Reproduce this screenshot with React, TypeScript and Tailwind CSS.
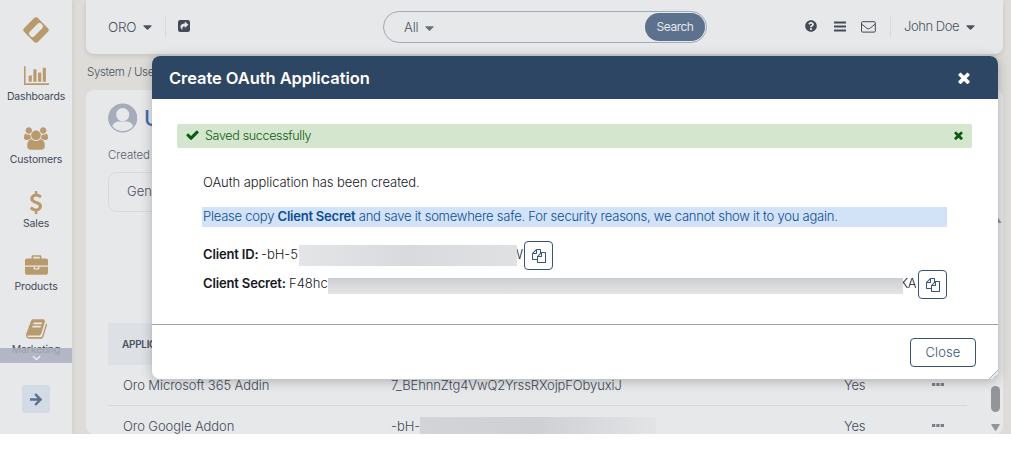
import type { ReactNode } from "react";
import { FaQuestionCircle, FaCaretDown } from "react-icons/fa";

type GlyphProps = { d: string; box?: string; className?: string };

const Glyph = ({ d, box = "0 0 1792 1792", className = "" }: GlyphProps) => (
  <svg viewBox={box} className={className} fill="currentColor" aria-hidden="true">
    <path d={d} />
  </svg>
);

const paths = {
  chart:
    "M640 896v512h-256v-512h256zm384-512v1024h-256v-1024h256zm1024 1152v128h-2048v-1536h128v1408h1920zm-640-896v768h-256v-768h256zm384-384v1152h-256v-1152h256z",
  users:
    "M593 896q-162 5-265 128h-134q-82 0-138-40.5t-56-118.5q0-353 124-353 6 0 43.5 21t97.5 42.5 119 21.5q67 0 133-23-5 37-5 66 0 139 81 256zm1071 637q0 120-73 189.5t-194 69.5h-874q-121 0-194-69.5t-73-189.5q0-53 3.5-103.5t14-109 26.5-108.5 43-97.5 62-81 85.5-53.5 111.5-20q10 0 43 21.5t73 48 107 48 135 21.5 135-21.5 107-48 73-48 43-21.5q61 0 111.5 20t85.5 53.5 62 81 43 97.5 26.5 108.5 14 109 3.5 103.5zm-1024-1277q0 106-75 181t-181 75-181-75-75-181 75-181 181-75 181 75 75 181zm704 384q0 159-112.5 271.5t-271.5 112.5-271.5-112.5-112.5-271.5 112.5-271.5 271.5-112.5 271.5 112.5 112.5 271.5zm576 225q0 78-56 118.5t-138 40.5h-134q-103-123-265-128 81-117 81-256 0-29-5-66 66 23 133 23 59 0 119-21.5t97.5-42.5 43.5-21q124 0 124 353zm-128-609q0 106-75 181t-181 75-181-75-75-181 75-181 181-75 181 75 75 181z",
  dollar:
    "M1362 1185q0 153-99.5 263.5t-258.5 136.5v175q0 14-9 23t-23 9h-135q-13 0-22.5-9.5t-9.5-22.5v-175q-66-9-127.5-31t-101.5-44.5-74-48-46.5-37.5-17.5-18q-17-21-2-41l103-135q7-10 23-12 15-2 24 9l2 2q113 99 243 125 37 8 74 8 81 0 142.5-43t61.5-122q0-28-15-53t-33.5-42-58.5-37.5-66-32-80-32.5q-39-16-61.5-25t-61.5-26.5-62.5-31-56.5-35.5-53.5-42.5-43.5-49-35.5-58-21-66.5-8.5-78q0-138 98-242t255-134v-180q0-13 9.5-22.5t22.5-9.5h135q14 0 23 9t9 23v176q57 6 110.5 23t87 33.5 63.5 37.5 39 29 15 14q17 18 5 38l-81 146q-8 15-23 16-14 3-27-7-3-3-14.5-12t-39-26.5-58.5-32-74.5-26-85.5-11.5q-95 0-155 43t-60 111q0 26 8.5 48t29.5 41.5 39.5 33 56 31 60.5 27 70 27.5q53 20 81 31.5t76 35 75.5 42.5 62 50 53 63.5 31.5 76.5 13 94z",
  briefcase:
    "M640 256h512v-128h-512v128zm1152 640v480q0 66-47 113t-113 47h-1472q-66 0-113-47t-47-113v-480h672v160q0 26 19 45t45 19h320q26 0 45-19t19-45v-160h672zm-768 0v128h-256v-128h256zm768-480v384h-1792v-384q0-66 47-113t113-47h352v-160q0-40 28-68t68-28h576q40 0 68 28t28 68v160h352q66 0 113 47t47 113z",
  book: "M1703 478q40 57 18 129l-275 906q-19 64-76.5 107.5t-122.5 43.5h-923q-77 0-148.5-53.5t-99.5-131.5q-24-67-2-127 0-4 3-27t4-37q1-8-3-21.5t-3-19.5q2-11 8-21t16.5-23.5 16.5-23.5q23-38 45-91.5t30-91.5q3-10 .5-30t-.5-28q3-11 17-28t17-23q21-36 42-92t25-90q1-9-2.5-32t.5-28q4-13 22-30.5t22-22.5q19-26 42.5-84.5t27.5-96.5q1-8-3-25.5t-2-26.5q2-8 9-18t18-23 17-21q8-12 16.5-30.5t15-35 16-36 19.5-32 26.5-23.5 36-11.5 47.5 5.5l-1 3q38-9 51-9h761q74 0 114 56t18 130l-274 906q-36 119-71.5 153.5t-128.5 34.5h-869q-27 0-38 15-11 16-1 43 24 70 144 70h923q29 0 56-15.5t35-41.5l300-987q7-22 5-57 38 15 59 43zm-1064 2q-4 13 2 22.5t20 9.5h608q13 0 25.5-9.5t16.5-22.5l21-64q4-13-2-22.5t-20-9.5h-608q-13 0-25.5 9.5t-16.5 22.5zm-83 256q-4 13 2 22.5t20 9.5h608q13 0 25.5-9.5t16.5-22.5l21-64q4-13-2-22.5t-20-9.5h-608q-13 0-25.5 9.5t-16.5 22.5z",
  times:
    "M1490 1322q0 40-28 68l-136 136q-28 28-68 28t-68-28l-294-294-294 294q-28 28-68 28t-68-28l-136-136q-28-28-28-68t28-68l294-294-294-294q-28-28-28-68t28-68l136-136q28-28 68-28t68 28l294 294 294-294q28-28 68-28t68 28l136 136q28 28 28 68t-28 68l-294 294 294 294q28 28 28 68z",
  check:
    "M1671 566q0 40-28 68l-724 724-136 136q-28 28-68 28t-68-28l-136-136-362-362q-28-28-28-68t28-68l136-136q28-28 68-28t68 28l294 295 656-657q28-28 68-28t68 28l136 136q28 28 28 68z",
  files:
    "M1696 384q40 0 68 28t28 68v1216q0 40-28 68t-68 28h-960q-40 0-68-28t-28-68v-288h-544q-40 0-68-28t-28-68v-672q0-40 20-88t48-76l408-408q28-28 76-48t88-20h416q40 0 68 28t28 68v328q68-40 128-40h416zm-544 213l-299 299h299v-299zm-640-384l-299 299h299v-299zm196 647l316-316v-416h-384v416q0 40-28 68t-68 28h-416v640h512v-256q0-40 20-88t48-76zm956 804v-1152h-384v416q0 40-28 68t-68 28h-416v640h896z",
};

const navItems = [
  { label: "Dashboards", d: paths.chart, box: "0 128 2048 1536", size: "h-[19px] w-[25px]" },
  { label: "Customers", d: paths.users, box: "0 0 1920 1792", size: "h-[23px] w-[24px]" },
  { label: "Sales", d: paths.dollar, box: "384 0 1024 1792", size: "h-[23px] w-[14px]" },
  { label: "Products", d: paths.briefcase, box: "0 0 1792 1536", size: "h-[20px] w-[23px]" },
  { label: "Marketing", d: paths.book, box: "64 128 1664 1536", size: "h-[20px] w-[21px]" },
];

const Caret = ({ className = "" }: { className?: string }) => (
  <FaCaretDown className={`h-[14px] w-[9px] shrink-0 ${className}`} />
);

const Sidebar = () => (
  <aside className="relative flex h-full w-[72px] shrink-0 flex-col items-center bg-[#e6e8ea] shadow-[1px_0_5px_rgba(0,0,0,0.08)]">
    <svg viewBox="0 0 28 28" className="mt-[16px] h-7 w-7 shrink-0" aria-hidden="true">
      <rect x="4.2" y="4.2" width="19.6" height="19.6" rx="3" transform="rotate(45 14 14)" fill="#b99a6d" />
      <rect x="5.8" y="10.8" width="16.4" height="6.4" rx="2.6" transform="rotate(-45 14 14)" fill="#e6e8ea" />
    </svg>
    <nav className="mt-[20px] flex flex-col">
      {navItems.map((item) => (
        <div key={item.label} className="flex h-[63.3px] w-[72px] flex-col items-center">
          <div className="flex h-[23px] items-center">
            <Glyph d={item.d} box={item.box} className={`${item.size} text-[#b99a6d]`} />
          </div>
          <span className="mt-[3px] text-[10.5px] leading-[14px] tracking-[-0.15px] text-[#444b58]">{item.label}</span>
        </div>
      ))}
    </nav>
    <div className="absolute left-0 top-[348px] flex h-[15px] w-[72px] items-center justify-center bg-[#a9adbd]/85">
      <svg viewBox="0 0 10 6" className="mt-[4px] h-[6px] w-[9px]" fill="none" stroke="#eceef2" strokeWidth="1.6" aria-hidden="true">
        <path d="M1 1l4 3.8L9 1" />
      </svg>
    </div>
    <div className="absolute left-[22px] top-[385px] flex h-7 w-7 items-center justify-center rounded-[3px] bg-[#d3dbe7]">
      <svg viewBox="0 0 12 13" className="h-[13px] w-3" fill="none" stroke="#5b718d" strokeWidth="2.5" aria-hidden="true">
        <path d="M0 6.5h10M5.2 1l5.3 5.5L5.2 12" />
      </svg>
    </div>
  </aside>
);

const TopBar = () => (
  <header className="flex h-[54px] w-[917px] shrink-0 items-center rounded-b-lg bg-[#e6e8ea] pl-[22px] text-[13px] font-light text-[#4c525e] shadow-[0_2px_5px_rgba(0,0,0,0.1)]">
    <span className="w-[31px] text-[13.5px] tracking-[-0.3px]">ORO</span>
    <Caret className="ml-[4px]" />
    <div className="ml-[13px] h-[22px] w-px bg-[#d8dadf]" />
    <svg viewBox="0 0 12 12" className="mb-[2px] ml-[12px] h-3 w-3" aria-hidden="true">
      <rect width="12" height="12" rx="2.2" fill="#444a56" />
      <path d="M6.8 1.6l3.6 3.2-3.6 3.2V6.2C4.9 6.1 4 7 4.4 9.8 1.3 7.4 2 3.4 6.8 3.4z" fill="#e6e8ea" />
    </svg>
    <div className="ml-[193px] flex h-8 w-[324px] items-center rounded-full border border-[#a4a8bb] pl-[20px] pr-[1px]">
      <span className="mt-[2px] tracking-[-0.1px]">All</span>
      <Caret className="ml-[6px] mt-[1px] text-[#6b7078]" />
      <div className="ml-auto flex h-7 w-[60px] items-center justify-center rounded-full bg-[#5b718d] text-[12px] font-normal tracking-[-0.5px] text-[#e6e8ea]">
        Search
      </div>
    </div>
    <FaQuestionCircle className="mb-[2px] ml-[98px] h-3 w-3 shrink-0 text-[#444a56]" />
    <svg viewBox="0 0 12 11" className="mb-[2px] ml-[17px] h-[11px] w-3" fill="#444a56" aria-hidden="true">
      <path d="M0 .5h12v2H0zM0 4.5h12v2H0zM0 8.5h12v2H0z" />
    </svg>
    <svg viewBox="0 0 15 12" className="ml-[15px] h-3 w-[15px]" fill="none" stroke="#444a56" strokeWidth="1" aria-hidden="true">
      <rect x=".5" y=".7" width="13.8" height="10.4" rx="1" />
      <path d="M.8 3.2l5.2 4.2q1.4 1 2.8 0L14 3.2" />
    </svg>
    <div className="ml-[14px] h-[22px] w-px bg-[#d8dadf]" />
    <span className="ml-[13px] w-[57px] whitespace-nowrap tracking-[-0.45px]">John Doe</span>
    <Caret className="ml-[5px]" />
  </header>
);

const Dots = () => (
  <svg viewBox="0 0 12 3" className="mb-[3px] h-[3px] w-3" fill="#7b7f88" aria-hidden="true">
    <path d="M0 0h3.3v3H0zM4.3 0h3.3v3H4.3zM8.6 0H12v3H8.6z" />
  </svg>
);

const Row = ({ name, id, className }: { name: string; id: ReactNode; className: string }) => (
  <div className={`flex w-[859px] shrink-0 items-center pl-[15px] text-[13px] font-light text-[#454b58] ${className}`}>
    <span className="w-[268px] tracking-[-0.08px]">{name}</span>
    <div className="flex w-[453px] items-center">{id}</div>
    <span className="w-[88px] tracking-[-0.2px]">Yes</span>
    <Dots />
  </div>
);

const Content = () => (
  <main className="relative mt-[9px] flex h-[344px] w-[917px] shrink-0 flex-col overflow-hidden rounded-lg bg-[#e6e8ea] pl-[22px]">
    <div className="mt-[13px] flex h-[30px] shrink-0 items-center">
      <svg viewBox="0 0 30 30" className="h-[30px] w-[30px]" aria-hidden="true">
        <circle cx="14.7" cy="15" r="13.7" fill="#e6e8ea" stroke="#a7acbb" strokeWidth="1.6" />
        <path d="M3.8 24C5 20.4 7.5 19.3 10.2 18.6h9c2.7.7 5.2 1.8 6.4 5.4A14 14 0 0 0 14.7 1 14 14 0 0 0 3.8 24z" fill="#a7acbb" />
        <circle cx="14.7" cy="11.7" r="6.6" fill="#e6e8ea" />
        <path d="M4.6 23.5c1-2.9 3.1-4 6-4.7q4.1 2 8.2 0c2.9.7 5 1.8 6 4.7Q20.5 28 14.7 28T4.6 23.5z" fill="#e6e8ea" />
      </svg>
      <span className="ml-[6px] text-[22px] font-medium text-[#3d6eaf]">User</span>
    </div>
    <span className="mt-[14px] shrink-0 text-[11.5px] font-light leading-[16px] tracking-[-0.05px] text-[#5b606b]">Created At</span>
    <div className="mt-[9px] flex h-10 w-[400px] shrink-0 items-center rounded-lg border border-[#d7dae0] pl-[18px] text-[13px] font-light text-[#4c525e]">
      General
    </div>
    <div className="mt-[111px] flex h-[42px] w-[859px] shrink-0 items-center bg-[#dde0e5] pl-[14px] text-[10px] font-semibold tracking-[-0.3px] text-[#4c525e]">
      APPLICATION
    </div>
    <Row
      className="h-[41px] border-b border-[#d6d8dc] pt-[2px]"
      name="Oro Microsoft 365 Addin"
      id={<span className="tracking-[-0.11px]">7_BEhnnZtg4VwQ2YrssRXojpFObyuxiJ</span>}
    />
    <Row
      className="h-[41px]"
      name="Oro Google Addon"
      id={
        <>
          <span className="w-[29px] whitespace-nowrap">-bH-</span>
          <span className="h-[19px] w-[236px] bg-linear-to-r from-[#d2d4d8] via-[#ced0d4] to-[#e2e4e6]" />
        </>
      }
    />
    <div className="absolute bottom-[3px] right-[3px] flex w-[9px] flex-col items-center">
      <div className="h-[26px] w-[9px] rounded-full bg-[#949598]" />
      <svg viewBox="0 0 9 7" className="mt-[12px] h-[7px] w-[9px]" fill="#949598" aria-hidden="true">
        <path d="M.8 0h7.4q.8.3.4 1L5.2 6.4q-.7.8-1.4 0L.4 1Q0 .3.8 0z" />
      </svg>
    </div>
  </main>
);

const CopyButton = () => (
  <button className="flex h-[29px] w-[29px] items-center justify-center rounded-[4px] border border-[#35537b] bg-white">
    <Glyph d={paths.files} className="h-[14px] w-[14px] text-[#35537b]" />
  </button>
);

const Modal = () => (
  <section className="absolute left-[152px] top-[56px] flex h-[323px] w-[846px] flex-col overflow-hidden rounded-lg bg-white text-[13px] text-[#16181d] shadow-[0_2px_12px_rgba(0,0,0,0.25)]">
    <header className="flex h-[43px] shrink-0 items-center justify-between bg-[#2d4664] pl-[17px] pr-[28px]">
      <h1 className="pt-[1px] text-[16.5px] font-semibold tracking-[-0.07px] text-white">Create OAuth Application</h1>
      <Glyph d={paths.times} box="302 302 1188 1252" className="h-[12px] w-[12px] text-white" />
    </header>
    <div className="ml-[25px] mt-[25px] flex h-6 w-[795px] shrink-0 items-center rounded-[2px] bg-[#d4e6cd] pl-[9px] pr-[9px] text-[12.5px] font-light text-[#0c5b12]">
      <Glyph d={paths.check} box="121 270 1550 1252" className="mb-[2px] h-[10px] w-[13px]" />
      <span className="ml-[6px] tracking-[-0.32px]">Saved successfully</span>
      <Glyph d={paths.times} box="302 302 1188 1252" className="mb-[2px] ml-auto h-[9px] w-[9px]" />
    </div>
    <div className="ml-[50px] flex w-[745px] flex-col">
      <p className="mt-[24px] h-[20px] pl-[1px] font-light leading-5 tracking-[-0.07px]">OAuth application has been created.</p>
      <p className="mt-[15px] h-[20px] whitespace-nowrap bg-[#d2e3f8] pl-[1px] font-light leading-[19px] tracking-[-0.23px] text-[#0d4c93]">
        Please copy <b className="font-semibold">Client Secret</b> and save it somewhere safe. For security reasons, we cannot show it to you again.
      </p>
      <div className="mt-[14px] flex h-[29px] items-center pl-[1px]">
        <b className="mb-[2px] w-[58px] whitespace-nowrap font-semibold tracking-[-0.15px]">Client ID:</b>
        <span className="mb-[2px] w-[38px] font-light">-bH-5</span>
        <span className="mb-[1px] h-[21px] w-[218px] bg-linear-to-r from-[#e4e5e7] via-[#d9dadd] to-[#e0e1e3]" />
        <span className="mb-[2px] flex w-[6px] justify-end overflow-hidden font-light">W</span>
        <div className="ml-auto mr-[394px]"><CopyButton /></div>
      </div>
      <div className="flex h-[29px] items-center pl-[1px]">
        <b className="mb-[2px] w-[86px] whitespace-nowrap font-semibold tracking-[-0.15px]">Client Secret:</b>
        <span className="mb-[2px] w-[39px] font-light">F48hc</span>
        <span className="mt-[3px] h-[16px] w-[575px] bg-linear-to-b from-[#cccfd1] to-[#e4e5e7]" />
        <span className="mb-[2px] flex w-[13px] justify-end overflow-hidden font-light tracking-[-0.4px]">KA</span>
        <div className="ml-auto"><CopyButton /></div>
      </div>
    </div>
    <footer className="mt-auto flex h-[55px] shrink-0 items-center justify-end border-t border-[#9aa2b8] pr-[22px]">
      <button className="h-[29px] w-[66px] rounded-[4px] border border-[#35537b] pt-[1px] text-[13px] font-light tracking-[0.1px] text-[#35537b]">Close</button>
    </footer>
    <svg viewBox="0 0 9 9" className="absolute bottom-0 right-0 h-[9px] w-[9px]" aria-hidden="true">
      <path d="M0 9L9 0v9z" fill="#e6e8ea" />
      <path d="M0 9L9 0M4 9l5-5" stroke="#aaaeb5" strokeWidth="1" />
    </svg>
  </section>
);

export default function App() {
  return (
    <div className="h-[452px] w-[1011px] overflow-hidden bg-white font-['Inter','Noto_Sans',sans-serif]">
      <div className="relative flex h-[434px] w-[1011px] overflow-hidden bg-[#dddcd9]">
        <Sidebar />
        <div className="ml-[14px] flex flex-col">
          <TopBar />
          <span className="mt-[9px] pl-[1px] text-[11.5px] font-light leading-[18px] tracking-[-0.35px] text-[#4c525e]">System / Users</span>
          <Content />
        </div>
        <svg viewBox="0 0 6 5" className="absolute right-[9px] top-[218px] h-[5px] w-[7px]" fill="#949598" aria-hidden="true">
          <path d="M3 0l3 5H0z" />
        </svg>
        <Modal />
      </div>
    </div>
  );
}
